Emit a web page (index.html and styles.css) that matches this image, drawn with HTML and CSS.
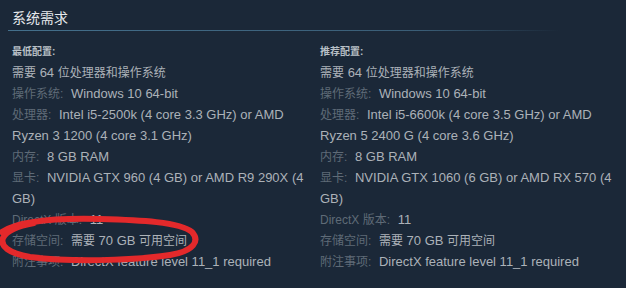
FILE: index.html
```html
<!DOCTYPE html>
<html lang="zh-CN">
<head>
<meta charset="utf-8">
<title>系统需求</title>
<link rel="stylesheet" href="styles.css">
</head>
<body>
<section class="sysreq">
  <h2 class="title">系统需求</h2>
  <div class="rule"></div>
  <div class="cols">
    <div class="col">
      <div class="head">最低配置:</div>
      <ul class="reqs">
        <li><span class="zh">需要</span> 64 <span class="zh">位处理器和操作系统</span></li>
        <li><span class="k">操作系统:</span> Windows 10 64-bit</li>
        <li><span class="k">处理器:</span> Intel i5-2500k (4 core 3.3 GHz) or AMD Ryzen 3 1200 (4 core 3.1 GHz)</li>
        <li><span class="k">内存:</span> 8 GB RAM</li>
        <li><span class="k">显卡:</span> NVIDIA GTX 960 (4 GB) or AMD R9 290X (4 GB)</li>
        <li><span class="k">DirectX 版本:</span> 11</li>
        <li><span class="k">存储空间:</span> <span class="zh">需要</span> 70 GB <span class="zh">可用空间</span></li>
        <li><span class="k">附注事项:</span> DirectX feature level 11_1 required</li>
      </ul>
    </div>
    <div class="col">
      <div class="head">推荐配置:</div>
      <ul class="reqs">
        <li><span class="zh">需要</span> 64 <span class="zh">位处理器和操作系统</span></li>
        <li><span class="k">操作系统:</span> Windows 10 64-bit</li>
        <li><span class="k">处理器:</span> Intel i5-6600k (4 core 3.5 GHz) or AMD Ryzen 5 2400 G (4 core 3.6 GHz)</li>
        <li><span class="k">内存:</span> 8 GB RAM</li>
        <li><span class="k">显卡:</span> NVIDIA GTX 1060 (6 GB) or AMD RX 570 (4 GB)</li>
        <li><span class="k">DirectX 版本:</span> 11</li>
        <li><span class="k">存储空间:</span> <span class="zh">需要</span> 70 GB <span class="zh">可用空间</span></li>
        <li><span class="k">附注事项:</span> DirectX feature level 11_1 required</li>
      </ul>
    </div>
  </div>
  <svg class="annot" viewBox="0 0 626 288" width="626" height="288" aria-hidden="true">
    <path d="M2 232 C 20 220, 60 218, 100 219 C 140 220, 180 222, 192 232 C 200 241, 194 251, 170 255 C 130 261, 70 262, 30 257 C 8 253, 0 246, 3 238 C 6 231, 18 226, 34 223"
      fill="none" stroke="#e3292b" stroke-width="6" stroke-linecap="round" stroke-linejoin="round"/>
  </svg>
</section>
</body>
</html>
```

FILE: styles.css
```css
html, body {
  margin: 0;
  padding: 0;
  background: #1b2838;
}

body {
  width: 626px;
  height: 288px;
  overflow: hidden;
  font-family: "Liberation Sans", "Noto Sans CJK SC", sans-serif;
  font-size: 13px;
  color: #acb2b8;
}

.sysreq {
  position: relative;
  padding: 6px 12px 0;
  height: 282px;
}

.title {
  margin: 0;
  font-size: 14px;
  font-weight: normal;
  line-height: 24px;
  color: #e6e9ec;
}

.rule {
  height: 1px;
  margin-left: -4px;
  width: 552px;
  background: linear-gradient(to right, #44708c 0%, #3a5d76 75%, rgba(58, 93, 118, 0) 100%);
}

.cols {
  display: grid;
  grid-template-columns: 296px 296px;
  column-gap: 12px;
  margin-top: 10px;
}

.head {
  font-size: 10px;
  font-weight: bold;
  line-height: 21px;
  color: #b9c0c7;
}

.reqs {
  list-style: none;
  margin: 0;
  padding: 0;
}

.reqs li {
  line-height: 21px;
}

.zh {
  font-size: 12px;
  line-height: 1;
}

.k {
  font-size: 12px;
  line-height: 1;
  color: #5f6b77;
  margin-right: 4px;
}

.annot {
  position: absolute;
  left: 0;
  top: 0;
  pointer-events: none;
}
```
